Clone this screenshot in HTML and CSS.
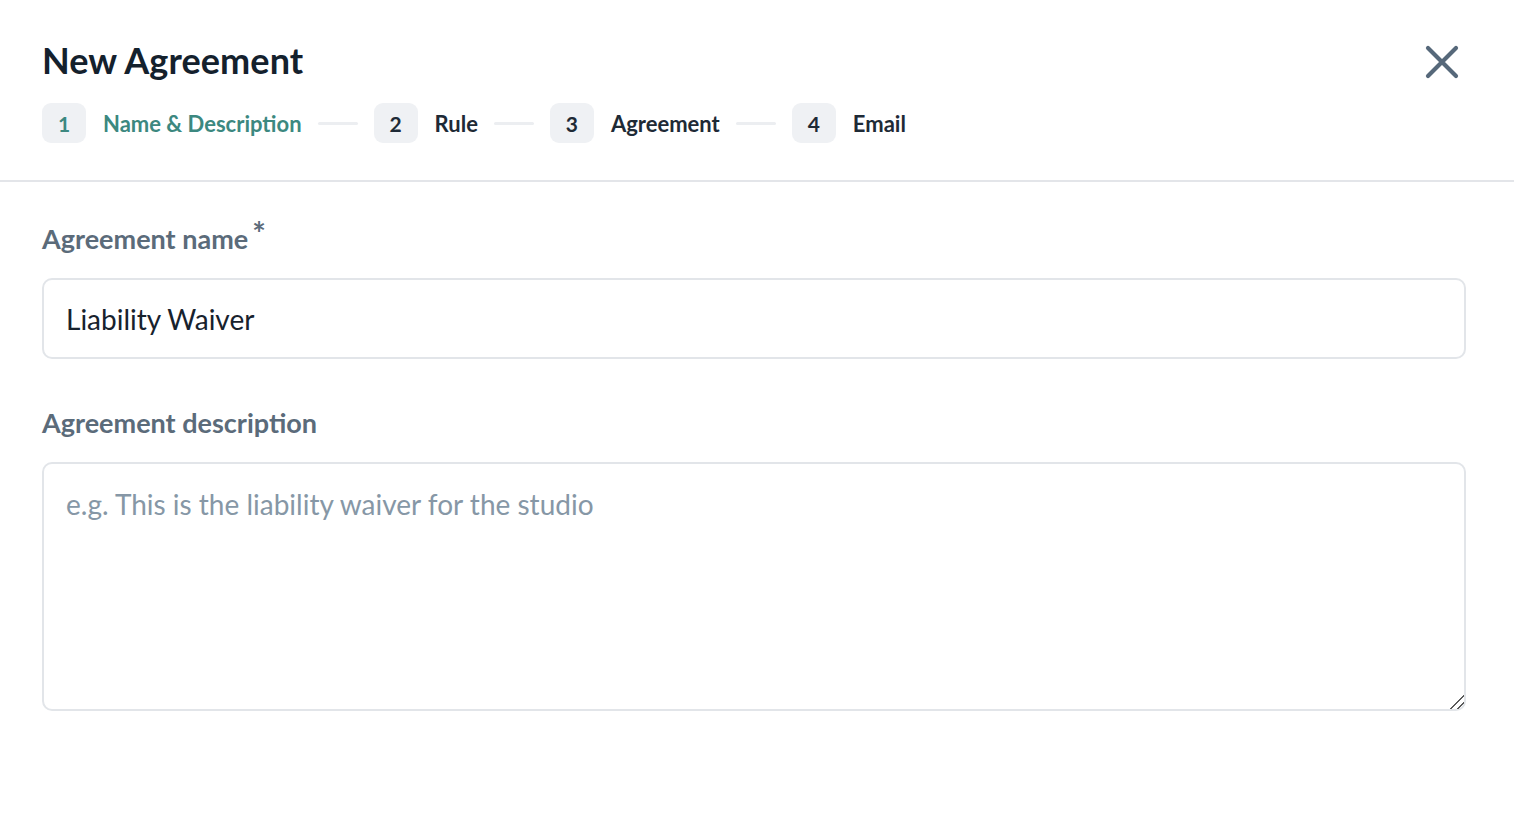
FILE: index.html
```html
<!DOCTYPE html>
<html lang="en">
<head>
<meta charset="utf-8">
<title>New Agreement</title>
<link rel="stylesheet" href="styles.css">
</head>
<body>
<div class="modal">
  <header class="header">
    <div class="header-top">
      <h1 class="title">New Agreement</h1>
      <button class="close" aria-label="Close">
        <svg width="36" height="36" viewBox="0 0 36 36"><path d="M4 4 L32 32 M32 4 L4 32" stroke="#56687a" stroke-width="4.2" stroke-linecap="round" fill="none"/></svg>
      </button>
    </div>
    <ol class="steps">
      <li class="step active"><span class="num">1</span><span class="label">Name &amp; Description</span></li>
      <li class="sep"></li>
      <li class="step"><span class="num">2</span><span class="label">Rule</span></li>
      <li class="sep"></li>
      <li class="step"><span class="num">3</span><span class="label">Agreement</span></li>
      <li class="sep"></li>
      <li class="step"><span class="num">4</span><span class="label">Email</span></li>
    </ol>
  </header>
  <main class="body">
    <div class="field">
      <label class="field-label" for="name">Agreement name<span class="req">*</span></label>
      <input id="name" class="input" type="text" value="Liability Waiver">
    </div>
    <div class="field">
      <label class="field-label" for="desc">Agreement description</label>
      <textarea id="desc" class="textarea" placeholder="e.g. This is the liability waiver for the studio"></textarea>
    </div>
  </main>
</div>
</body>
</html>
```
FILE: styles.css
```css
* { box-sizing: border-box; }
html, body { margin: 0; padding: 0; background: #fff; }
body { font-family: Lato, "Open Sans", sans-serif; color: #1a2530; }
.modal { width: 1514px; }
.header { border-bottom: 2px solid #e3e5e9; padding: 38px 42px 37px 42px; }
.header-top { display: flex; justify-content: space-between; align-items: flex-start; }
.title { margin: 0; font-size: 36px; font-weight: 700; color: #14212d; line-height: 44px; letter-spacing: 0.1px; }
.close { background: none; border: 0; padding: 0; margin: 6px 12px 0 0; width: 36px; height: 36px; cursor: pointer; display: flex; }
.steps { list-style: none; margin: 21px 0 0 0; padding: 0; display: flex; align-items: center; gap: 16px; }
.step { display: flex; align-items: center; gap: 17px; }
.num { width: 44px; height: 40px; border-radius: 9px; background: #eff1f4; display: flex; align-items: center; justify-content: center; font-size: 21px; font-weight: 700; color: #1e2a36; }
.label { font-size: 22px; font-weight: 700; color: #1e2a36; }
.step.active .num, .step.active .label { color: #3c8880; }
.sep { width: 40px; height: 3px; background: #eceef1; border-radius: 2px; }
.body { padding: 40px 48px 0 42px; }
.field { display: flex; flex-direction: column; margin-bottom: 47px; }
.field-label { font-size: 27px; font-weight: 700; color: #5b6b7a; line-height: 34px; margin-bottom: 22px; }
.req { display: inline-block; font-size: 32px; line-height: 1; vertical-align: top; margin-top: -4px; margin-left: 4px; color: #5b6b7a; }
.input, .textarea { width: 100%; border: 2px solid #e2e5e9; border-radius: 10px; font-family: Lato, "Open Sans", sans-serif; font-size: 28px; color: #17222d; background: #fff; outline: none; }
.input { height: 81px; padding: 0 22px; }
.textarea { height: 249px; padding: 22px 22px; resize: vertical; line-height: 36px; }
.textarea::placeholder { color: #8697a6; }
.textarea::-webkit-resizer { background: linear-gradient(135deg, transparent 0 52%, #5a5a5a 52% 60%, transparent 60% 74%, #5a5a5a 74% 82%, transparent 82%); }
```
